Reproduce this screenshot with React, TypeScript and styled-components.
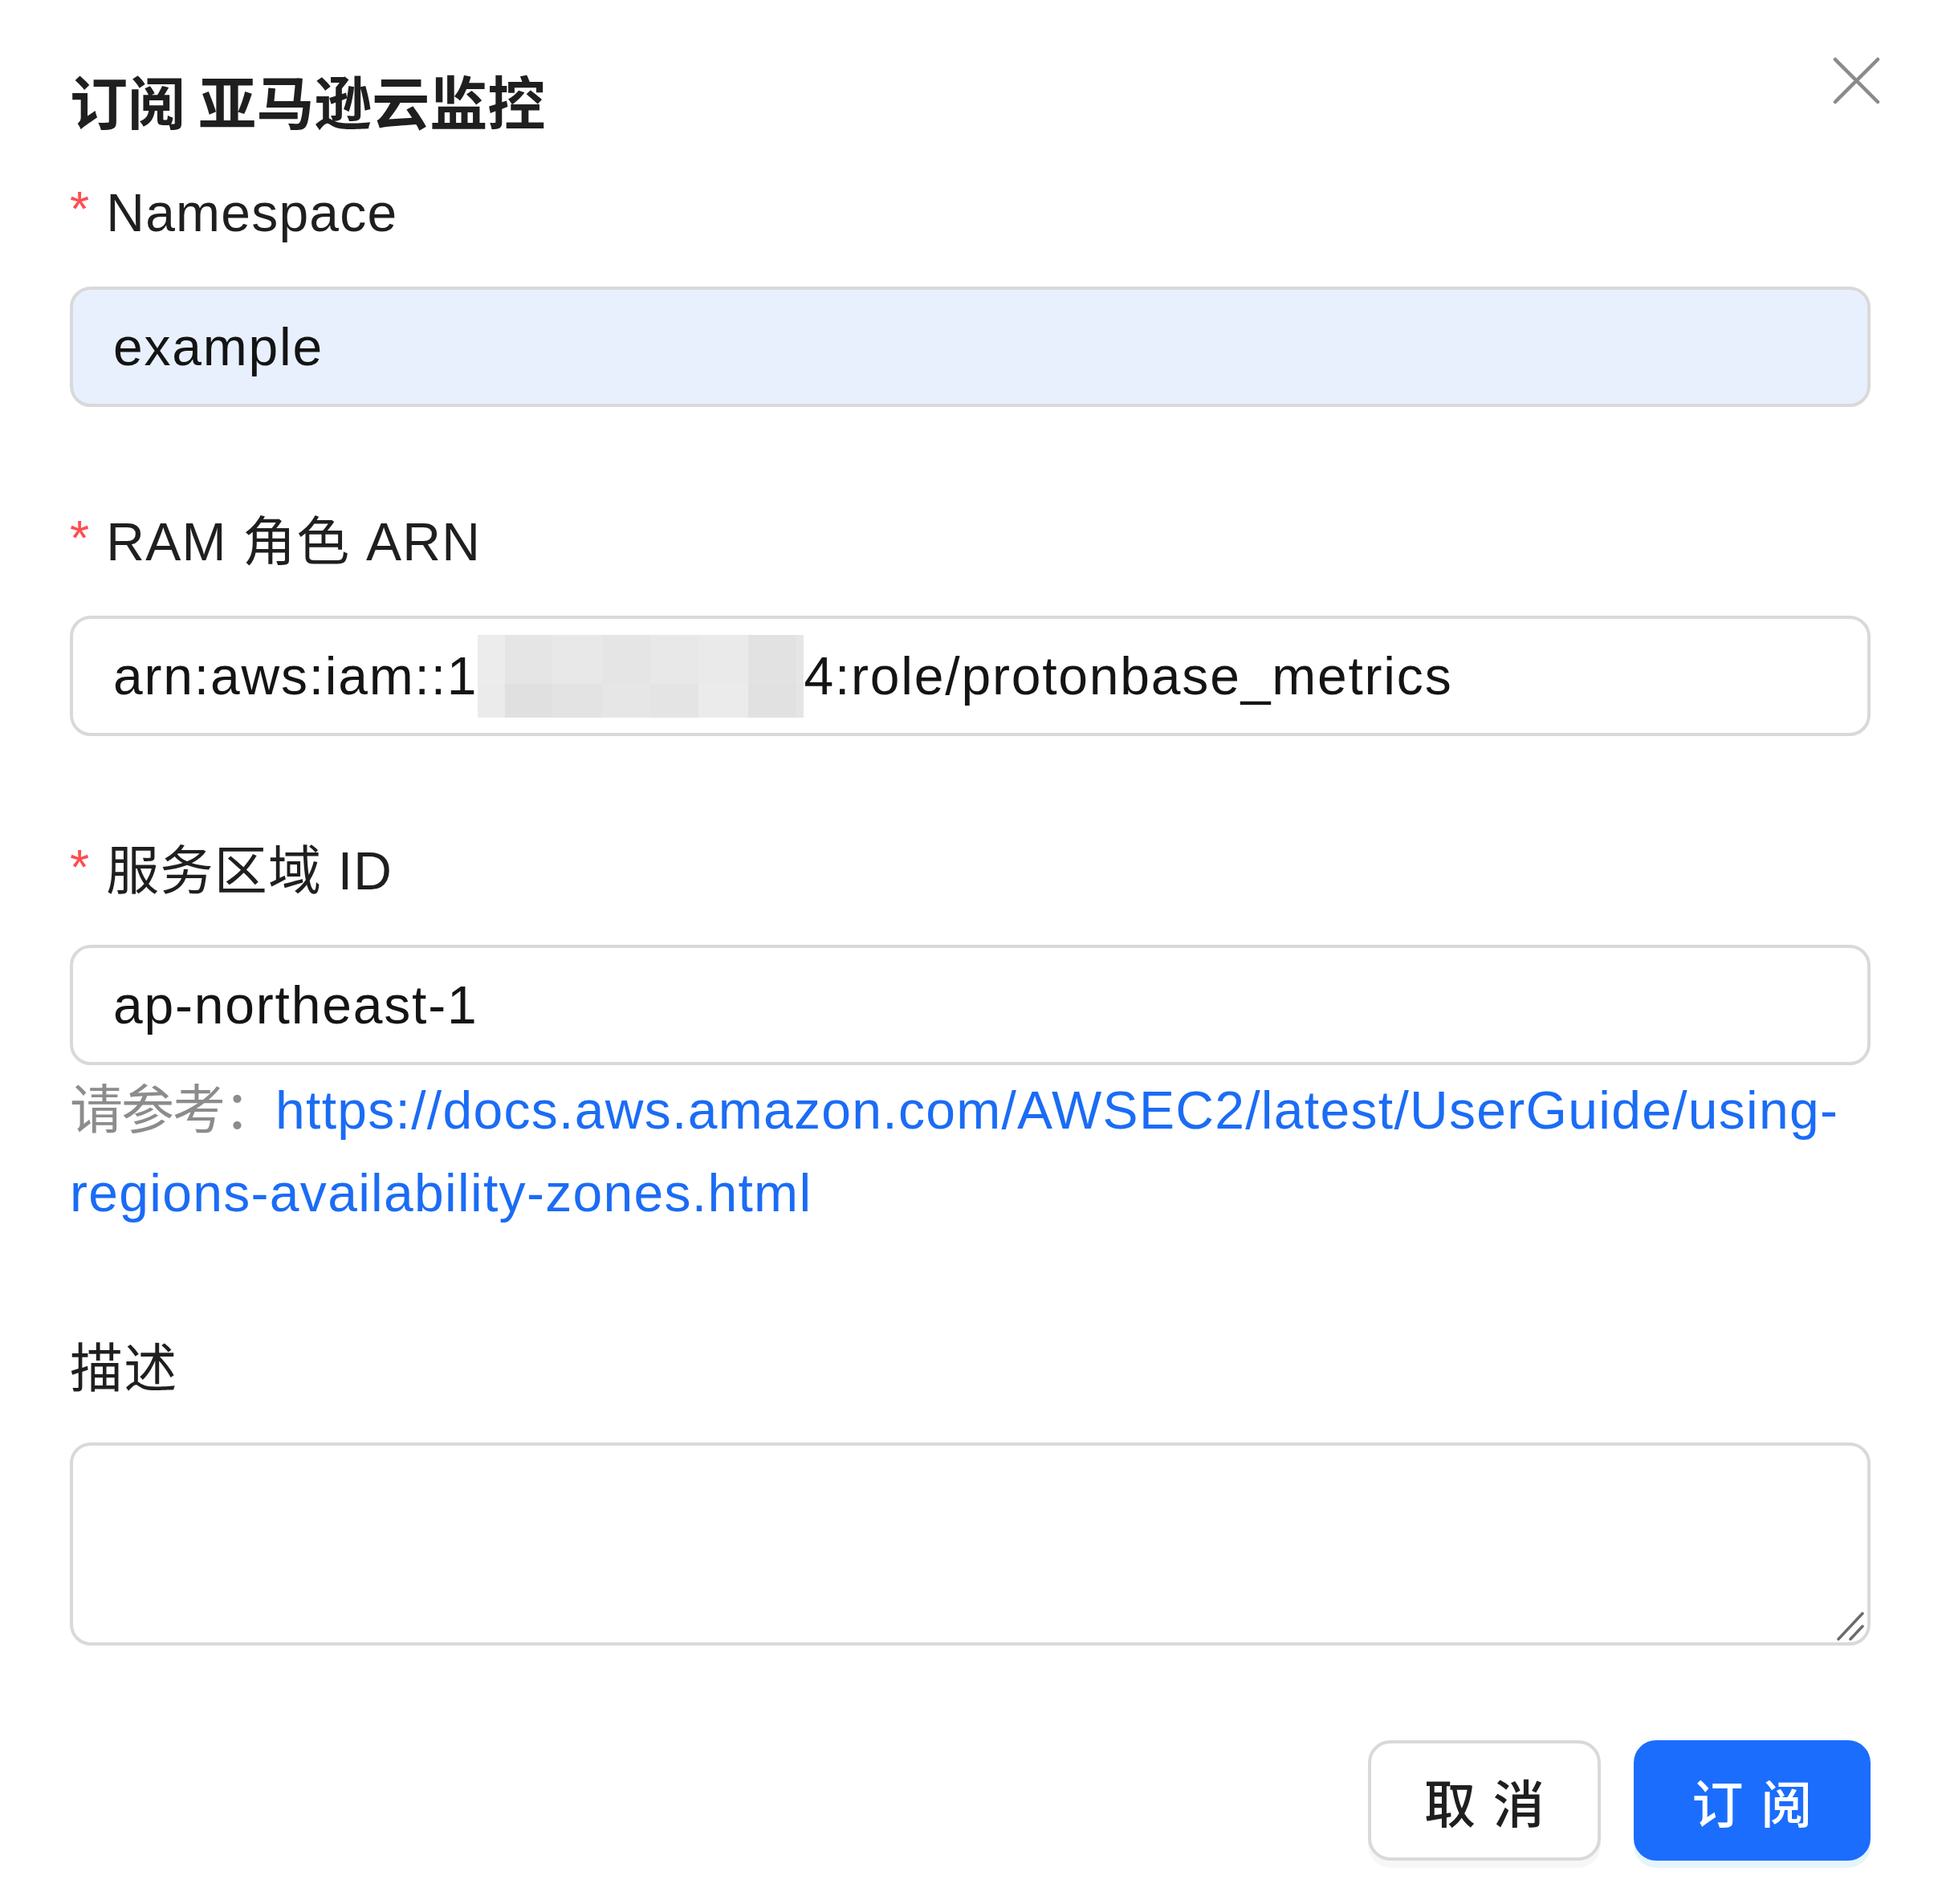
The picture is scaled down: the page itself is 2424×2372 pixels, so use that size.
import React from 'react';
import styled, { createGlobalStyle } from 'styled-components';

const GlobalStyle = createGlobalStyle`
  html, body {
    margin: 0;
    padding: 0;
    background: #ffffff;
  }
  body {
    font-family: "Liberation Sans", "Noto Sans CJK SC", sans-serif;
    color: #1f1f1f;
  }
  * {
    box-sizing: border-box;
  }
`;

const Modal = styled.section`
  position: relative;
  padding: 68px 94px 56px 87px;
  background: #ffffff;
`;

const Title = styled.h2`
  margin: 0 0 34px;
  font-family: "Noto Sans CJK SC", "Liberation Sans", sans-serif;
  font-size: 72px;
  line-height: 112px;
  font-weight: 700;
  color: #1f1f1f;
`;

const CloseButton = styled.button`
  position: absolute;
  top: 71px;
  right: 82px;
  width: 59px;
  height: 59px;
  padding: 0;
  border: none;
  background: transparent;
  cursor: pointer;
  svg {
    display: block;
  }
`;

const Form = styled.form`
  display: flex;
  flex-direction: column;
`;

const FormItem = styled.div<{ $gap?: number }>`
  display: flex;
  flex-direction: column;
  margin-bottom: ${(p) => p.$gap ?? 117}px;
`;

const Label = styled.label`
  display: flex;
  align-items: center;
  height: 103px;
  margin-bottom: 40px;
  font-size: 66px;
  line-height: 103px;
  letter-spacing: 1.2px;
  color: #1f1f1f;
`;

const Required = styled.span`
  align-self: flex-start;
  margin-right: 20px;
  font-family: "Liberation Sans", sans-serif;
  font-size: 62px;
  line-height: 92px;
  color: #ff4d4f;
`;

const Field = styled.div<{ $autofill?: boolean }>`
  display: flex;
  align-items: center;
  height: 150px;
  padding: 0 50px;
  border: 4px solid #d9d9d9;
  border-radius: 26px;
  background: ${(p) => (p.$autofill ? '#e8f0fe' : '#ffffff')};
  font-size: 66px;
  letter-spacing: 1.8px;
  color: #141414;
  white-space: nowrap;
`;

const Masked = styled.span`
  display: inline-grid;
  grid-template-columns: 34px 59px 62px 60px 60px 62px 60px 9px;
  grid-template-rows: 61px 42px;
  vertical-align: -45px;
`;

const MaskCell = styled.span<{ $shade: string }>`
  background: ${(p) => p.$shade};
`;

const Help = styled.div`
  margin-top: 5px;
  font-size: 66px;
  line-height: 103px;
  color: #8c8c8c;
  a {
    color: #1b6cf5;
    letter-spacing: 1.3px;
    text-decoration: none;
  }
`;

const HelpPrefix = styled.span`
  letter-spacing: -2px;
`;

const TextAreaWrap = styled.div`
  position: relative;
  height: 253px;
`;

const TextArea = styled.textarea`
  display: block;
  width: 100%;
  height: 100%;
  padding: 20px 50px;
  border: 4px solid #d9d9d9;
  border-radius: 26px;
  resize: none;
  outline: none;
  font-family: inherit;
  font-size: 66px;
  color: #141414;
`;

const Grip = styled.svg`
  position: absolute;
  right: 7px;
  bottom: 5px;
`;

const Footer = styled.div`
  display: flex;
  justify-content: flex-end;
  gap: 41px;
  margin-top: 1px;
`;

const Button = styled.button<{ $primary?: boolean }>`
  width: ${(p) => (p.$primary ? 295 : 290)}px;
  height: 150px;
  padding: 0;
  border: 4px solid ${(p) => (p.$primary ? '#1b6dfd' : '#d9d9d9')};
  border-radius: 28px;
  background: ${(p) => (p.$primary ? '#1b6dfd' : '#ffffff')};
  color: ${(p) => (p.$primary ? '#ffffff' : '#1f1f1f')};
  box-shadow: ${(p) => (p.$primary ? '0 9px 0 rgba(5, 145, 255, 0.1)' : '0 9px 0 rgba(0, 0, 0, 0.03)')};
  font-family: "Noto Sans CJK SC", sans-serif;
  font-size: 64px;
  font-weight: 500;
  cursor: pointer;
  span {
    letter-spacing: 0.34em;
    margin-right: -0.34em;
  }
`;

const maskTop = ['#ececec', '#e5e5e5', '#e8e8e8', '#e5e5e5', '#e8e8e8', '#eaeaea', '#e2e2e2', '#e6e6e6'];
const maskBottom = ['#ebebeb', '#e0e0e0', '#e3e3e3', '#e6e6e6', '#e4e4e4', '#ebebeb', '#e1e1e1', '#e5e5e5'];

const App = () => {
  return (
    <>
      <GlobalStyle />
      <Modal>
        <Title>订阅 亚马逊云监控</Title>
        <CloseButton type="button" aria-label="关闭">
          <svg width="59" height="59" viewBox="0 0 59 59">
            <path d="M3 3 L56 56 M56 3 L3 56" stroke="#8a8a8a" strokeWidth="4.5" strokeLinecap="round" />
          </svg>
        </CloseButton>

        <Form>
          <FormItem>
            <Label><Required>*</Required>Namespace</Label>
            <Field $autofill>example</Field>
          </FormItem>

          <FormItem>
            <Label><Required>*</Required>RAM 角色 ARN</Label>
            <Field>
              arn:aws:iam::1
              <Masked>
                {maskTop.map((c, i) => <MaskCell key={'t' + i} $shade={c} />)}
                {maskBottom.map((c, i) => <MaskCell key={'b' + i} $shade={c} />)}
              </Masked>
              4:role/protonbase_metrics
            </Field>
          </FormItem>

          <FormItem $gap={116}>
            <Label><Required>*</Required>服务区域 ID</Label>
            <Field>ap-northeast-1</Field>
            <Help>
              <HelpPrefix>请参考：</HelpPrefix><a href="#">https://docs.aws.amazon.com/AWSEC2/latest/UserGuide/using-regions-availability-zones.html</a>
            </Help>
          </FormItem>

          <FormItem>
            <Label>描述</Label>
            <TextAreaWrap>
              <TextArea />
              <Grip width="36" height="38" viewBox="0 0 36 38">
                <path d="M3 35 L33 3 M18 35 L33 19" stroke="#6b6b6b" strokeWidth="3.5" strokeLinecap="round" />
              </Grip>
            </TextAreaWrap>
          </FormItem>

          <Footer>
            <Button type="button"><span>取消</span></Button>
            <Button type="button" $primary><span>订阅</span></Button>
          </Footer>
        </Form>
      </Modal>
    </>
  );
};

export default App;
